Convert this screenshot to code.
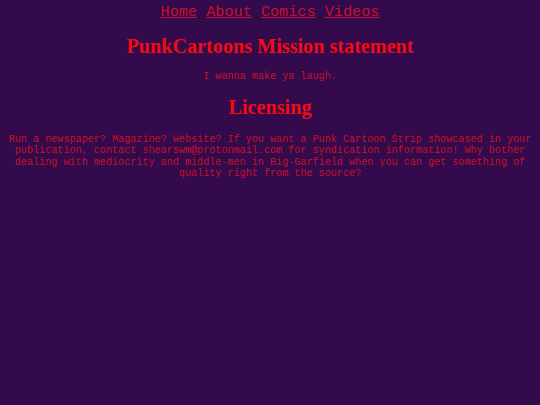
export default function App() {
  return (
    <div className="min-h-[405px] bg-[#330a4b] text-center font-['Liberation_Mono',monospace] text-[#c8102c]">
      <nav className="pt-[3px] text-[15.2px] leading-[19px]">
        <a href="#" className="underline">Home</a>{" "}
        <a href="#" className="underline">About</a>{" "}
        <a href="#" className="underline">Comics</a>{" "}
        <a href="#" className="underline">Videos</a>
      </nav>
      <h1 className="mt-[12px] font-['Liberation_Serif',serif] text-[20.2px] font-bold leading-[24px] text-[#f20a14]">
        PunkCartoons Mission statement
      </h1>
      <p className="mt-[13px] text-[10.13px] leading-[12px]">I wanna make ya laugh.</p>
      <h2 className="mt-[12px] font-['Liberation_Serif',serif] text-[20.2px] font-bold leading-[24px] text-[#f20a14]">
        Licensing
      </h2>
      <p className="mt-[15px] px-[8px] text-[10.13px] leading-[11.4px]">
        Run a newspaper? Magazine? Website? If you want a Punk Cartoon Strip showcased in your publication, contact shearswm@protonmail.com for syndication information! Why bother dealing with mediocrity and middle-men in Big-Garfield when you can get something of quality right from the source?
      </p>
    </div>
  );
}
